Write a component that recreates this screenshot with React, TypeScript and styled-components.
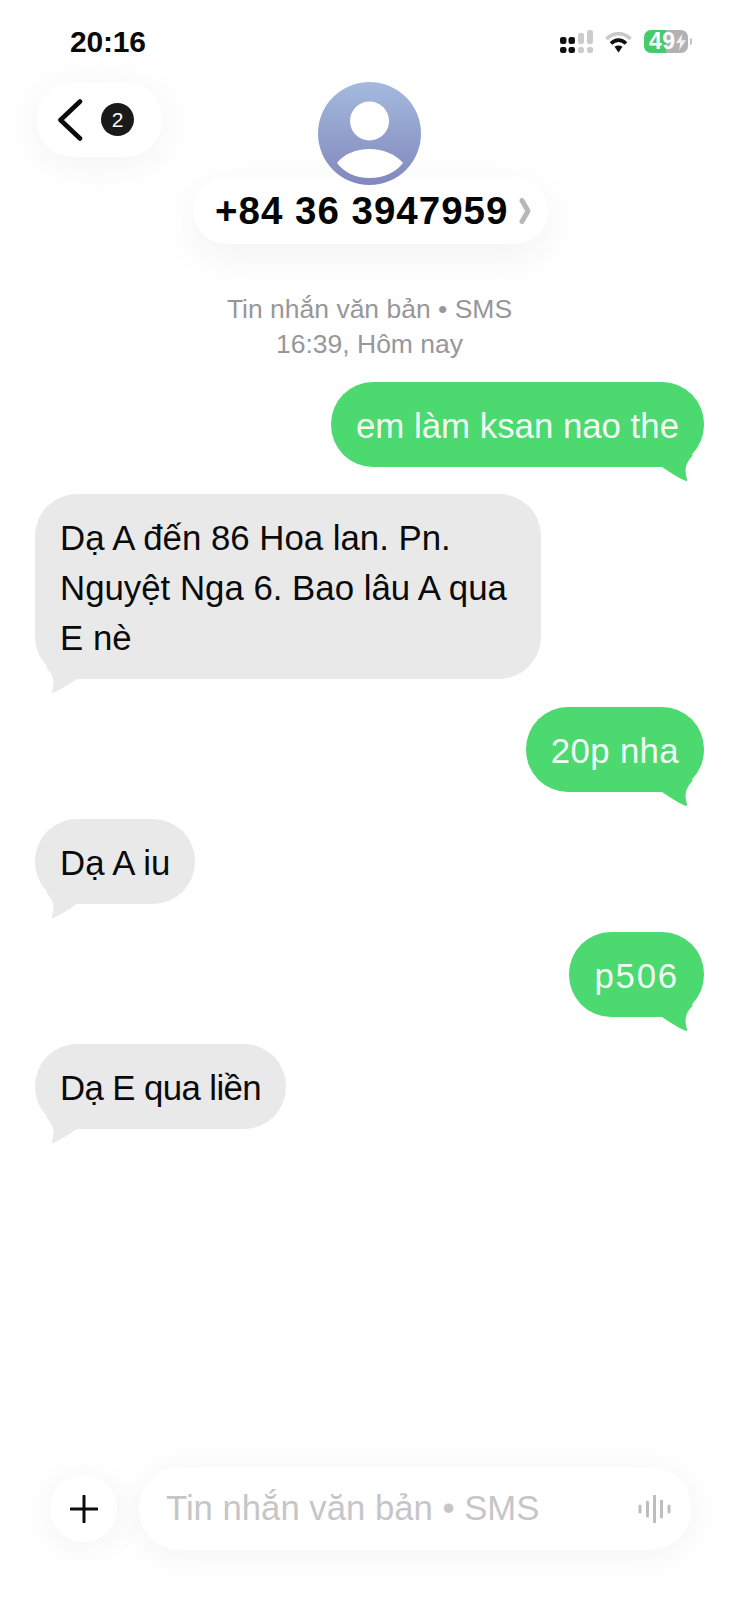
import React from "react";
import styled, { createGlobalStyle } from "styled-components";

const Global = createGlobalStyle`
  html, body { margin: 0; padding: 0; background: #fff; }
  * { box-sizing: border-box; }
  body { font-family: "Liberation Sans", Arial, sans-serif; color: #000; }
`;

const Page = styled.div`
  width: 739px;
  height: 1600px;
  display: flex;
  flex-direction: column;
  background: #fff;
  overflow: hidden;
`;

const StatusBar = styled.div`
  height: 82px;
  display: flex;
  align-items: flex-start;
  justify-content: space-between;
  padding: 25px 51px 0 70px;
`;

const Clock = styled.span`
  font-size: 30px;
  line-height: 34px;
  font-weight: 700;
  letter-spacing: -0.2px;
  color: #0a0a0a;
`;

const StatusIcons = styled.div`
  display: flex;
  align-items: center;
  gap: 12px;
  padding-top: 5px;
`;

const Battery = styled.div`
  position: relative;
  width: 44px;
  height: 23px;
  border-radius: 7px;
  background: linear-gradient(90deg, #45cb68 0 50%, #b2b2b2 50% 100%);
  display: flex;
  align-items: center;
  padding-left: 5px;
  color: #fff;
  font-size: 23px;
  font-weight: 700;
  letter-spacing: 0.5px;
  &::after {
    content: "";
    position: absolute;
    right: -4px;
    top: 8px;
    width: 2px;
    height: 7px;
    border-radius: 0 2px 2px 0;
    background: #c4c4c4;
  }
`;

const Header = styled.header`
  display: grid;
  grid-template-columns: 1fr auto 1fr;
`;

const BackPill = styled.div`
  justify-self: start;
  margin-left: 37px;
  width: 125px;
  height: 75px;
  border-radius: 36px;
  background: #fff;
  display: flex;
  align-items: center;
  padding-left: 20px;
  gap: 18px;
  box-shadow: 0 6px 44px rgba(0, 0, 0, 0.055);
`;

const Badge = styled.span`
  width: 33px;
  height: 33px;
  border-radius: 50%;
  background: #1a1a1a;
  color: #fff;
  font-size: 21px;
  display: flex;
  align-items: center;
  justify-content: center;
`;

const Contact = styled.div`
  display: flex;
  flex-direction: column;
  align-items: center;
`;

const Avatar = styled.div`
  position: relative;
  z-index: 1;
  width: 103px;
  height: 103px;
  border-radius: 50%;
  overflow: hidden;
  background: linear-gradient(180deg, #a4badd 0%, #8187bd 100%);
  display: flex;
  align-items: flex-start;
  justify-content: center;
`;

const NamePill = styled.div`
  margin-top: -8px;
  margin-left: 2px;
  width: 355px;
  height: 67px;
  border-radius: 33px;
  background: #fff;
  display: flex;
  align-items: center;
  padding-left: 22px;
  gap: 11px;
  font-size: 38.5px;
  font-weight: 700;
  letter-spacing: 1px;
  color: #050505;
  box-shadow: 0 12px 44px rgba(0, 0, 0, 0.055);
`;

const Meta = styled.div`
  margin-top: 48px;
  text-align: center;
  font-size: 26.5px;
  line-height: 35px;
  color: #97979b;
`;

const MessageList = styled.div`
  margin-top: 19.5px;
  padding: 0 35px;
  display: flex;
  flex-direction: column;
  gap: 27.5px;
`;

const Bubble = styled.div<{ $mine?: boolean; $tracking?: number }>`
  position: relative;
  align-self: ${(p) => (p.$mine ? "flex-end" : "flex-start")};
  max-width: 506px;
  padding: 19px 25px 16px;
  border-radius: 42px;
  font-size: 34.8px;
  line-height: 50px;
  letter-spacing: ${(p) => p.$tracking ?? 0}px;
  background: ${(p) => (p.$mine ? "#4cd970" : "#e9e9ea")};
  color: ${(p) => (p.$mine ? "#f1fcf4" : "#0a0a0a")};
`;

const TailSvg = styled.svg<{ $mine?: boolean }>`
  position: absolute;
  bottom: -16px;
  ${(p) => (p.$mine ? "right: 10px;" : "left: 10px; transform: scaleX(-1);")}
`;

const Composer = styled.div`
  margin-top: auto;
  margin-bottom: 50px;
  padding: 0 48px 0 50px;
  display: flex;
  align-items: center;
  gap: 22px;
`;

const PlusButton = styled.div`
  width: 67px;
  height: 67px;
  border-radius: 50%;
  background: #fff;
  display: flex;
  align-items: center;
  justify-content: center;
  box-shadow: 0 4px 36px rgba(0, 0, 0, 0.055);
`;

const Field = styled.div`
  flex: 1;
  height: 83px;
  border-radius: 40px;
  background: #fff;
  display: flex;
  align-items: center;
  justify-content: space-between;
  padding: 0 20px 0 27px;
  font-size: 34.7px;
  color: #c6c6c8;
  box-shadow: 0 4px 36px rgba(0, 0, 0, 0.055);
`;

const Tail = ({ mine }: { mine?: boolean }) => (
  <TailSvg $mine={mine} width="36" height="28" viewBox="0 0 36 28">
    <path
      d="M35 0 C 31 5 26 10 28 20 C 28.5 23 30 26.5 28 26 C 20 23 12 17 4 12 L 4 0 Z"
      fill={mine ? "#4cd970" : "#e9e9ea"}
    />
  </TailSvg>
);

const messages: { text: string; mine?: boolean; tracking?: number }[] = [
  { text: "em làm ksan nao the", mine: true },
  { text: "Dạ A đến 86 Hoa lan. Pn. Nguyệt Nga 6. Bao lâu A qua E nè" },
  { text: "20p nha", mine: true, tracking: 0.35 },
  { text: "Dạ A iu" },
  { text: "p506", mine: true, tracking: 1.8 },
  { text: "Dạ E qua liền", tracking: -0.6 },
];

export default function App() {
  return (
    <Page>
      <Global />
      <StatusBar>
        <Clock>20:16</Clock>
        <StatusIcons>
          <svg width="33" height="23" viewBox="0 0 33 23">
            <g fill="#111">
              <rect x="0" y="7" width="6.5" height="7" rx="2.2" />
              <rect x="8.5" y="7" width="6.5" height="7" rx="2.2" />
              <rect x="0" y="17" width="6.5" height="6" rx="2.2" />
              <rect x="8.5" y="17" width="6.5" height="6" rx="2.2" />
            </g>
            <g fill="#cccccc">
              <rect x="18" y="3" width="6" height="11" rx="2" />
              <rect x="27" y="0" width="6" height="14" rx="2" />
              <rect x="18" y="17" width="6" height="6" rx="2.2" />
              <rect x="27" y="17" width="6" height="6" rx="2.2" />
            </g>
          </svg>
          <svg width="27" height="22" viewBox="0 0 27 22" fill="none">
            <path d="M1.5 8 C 8 1 19 1 25.5 8" stroke="#c9c9c9" strokeWidth="3.6" />
            <path d="M6 12.5 C 10.5 8 16.5 8 21 12.5" stroke="#111" strokeWidth="3.6" />
            <path d="M9.5 15.8 L13.5 21.5 L17.5 15.8 C 15 14 12 14 9.5 15.8 Z" fill="#111" />
          </svg>
          <Battery>
            49
            <svg width="10" height="18" viewBox="0 0 11 18">
              <path d="M7 0 L0 10 H4.5 L3.5 18 L11 7 H6 Z" fill="#f0f0f0" />
            </svg>
          </Battery>
        </StatusIcons>
      </StatusBar>

      <Header>
        <BackPill>
          <svg width="26" height="42" viewBox="0 0 26 42" fill="none">
            <path d="M23 2.5 L3.5 21 L23 39.5" stroke="#0c0c0c" strokeWidth="4.6" strokeLinecap="round" strokeLinejoin="round" />
          </svg>
          <Badge>2</Badge>
        </BackPill>
        <Contact>
          <Avatar>
            <svg width="103" height="103" viewBox="0 0 103 103">
              <circle cx="51.5" cy="39" r="19.5" fill="#fff" />
              <path d="M19 81 C 26 72 38 67 51.5 67 C 65 67 77 72 85 81 C 78 90 66 96 51.5 96 C 37 96 26 90 19 81 Z" fill="#fff" />
            </svg>
          </Avatar>
          <NamePill>
            +84 36 3947959
            <svg width="12" height="26" viewBox="0 0 12 26" fill="none">
              <path d="M3 2.5 L9 13 L3 23.5" stroke="#b8b8b8" strokeWidth="5" strokeLinecap="round" strokeLinejoin="round" />
            </svg>
          </NamePill>
        </Contact>
        <div />
      </Header>

      <Meta>
        Tin nhắn văn bản • SMS
        <br />
        16:39, Hôm nay
      </Meta>

      <MessageList>
        {messages.map((m, i) => (
          <Bubble key={i} $mine={m.mine} $tracking={m.tracking}>
            {m.text}
            <Tail mine={m.mine} />
          </Bubble>
        ))}
      </MessageList>

      <Composer>
        <PlusButton>
          <svg width="28" height="28" viewBox="0 0 28 28">
            <path d="M14 1 V27 M1 14 H27" stroke="#0c0c0c" strokeWidth="3" strokeLinecap="round" />
          </svg>
        </PlusButton>
        <Field>
          Tin nhắn văn bản • SMS
          <svg width="33" height="28" viewBox="0 0 33 28">
            <path d="M2 11 V17 M9.5 7 V21 M16.5 1 V27 M23.5 6 V22 M31 11 V17" stroke="#bdbdbd" strokeWidth="3" strokeLinecap="round" />
          </svg>
        </Field>
      </Composer>
    </Page>
  );
}
